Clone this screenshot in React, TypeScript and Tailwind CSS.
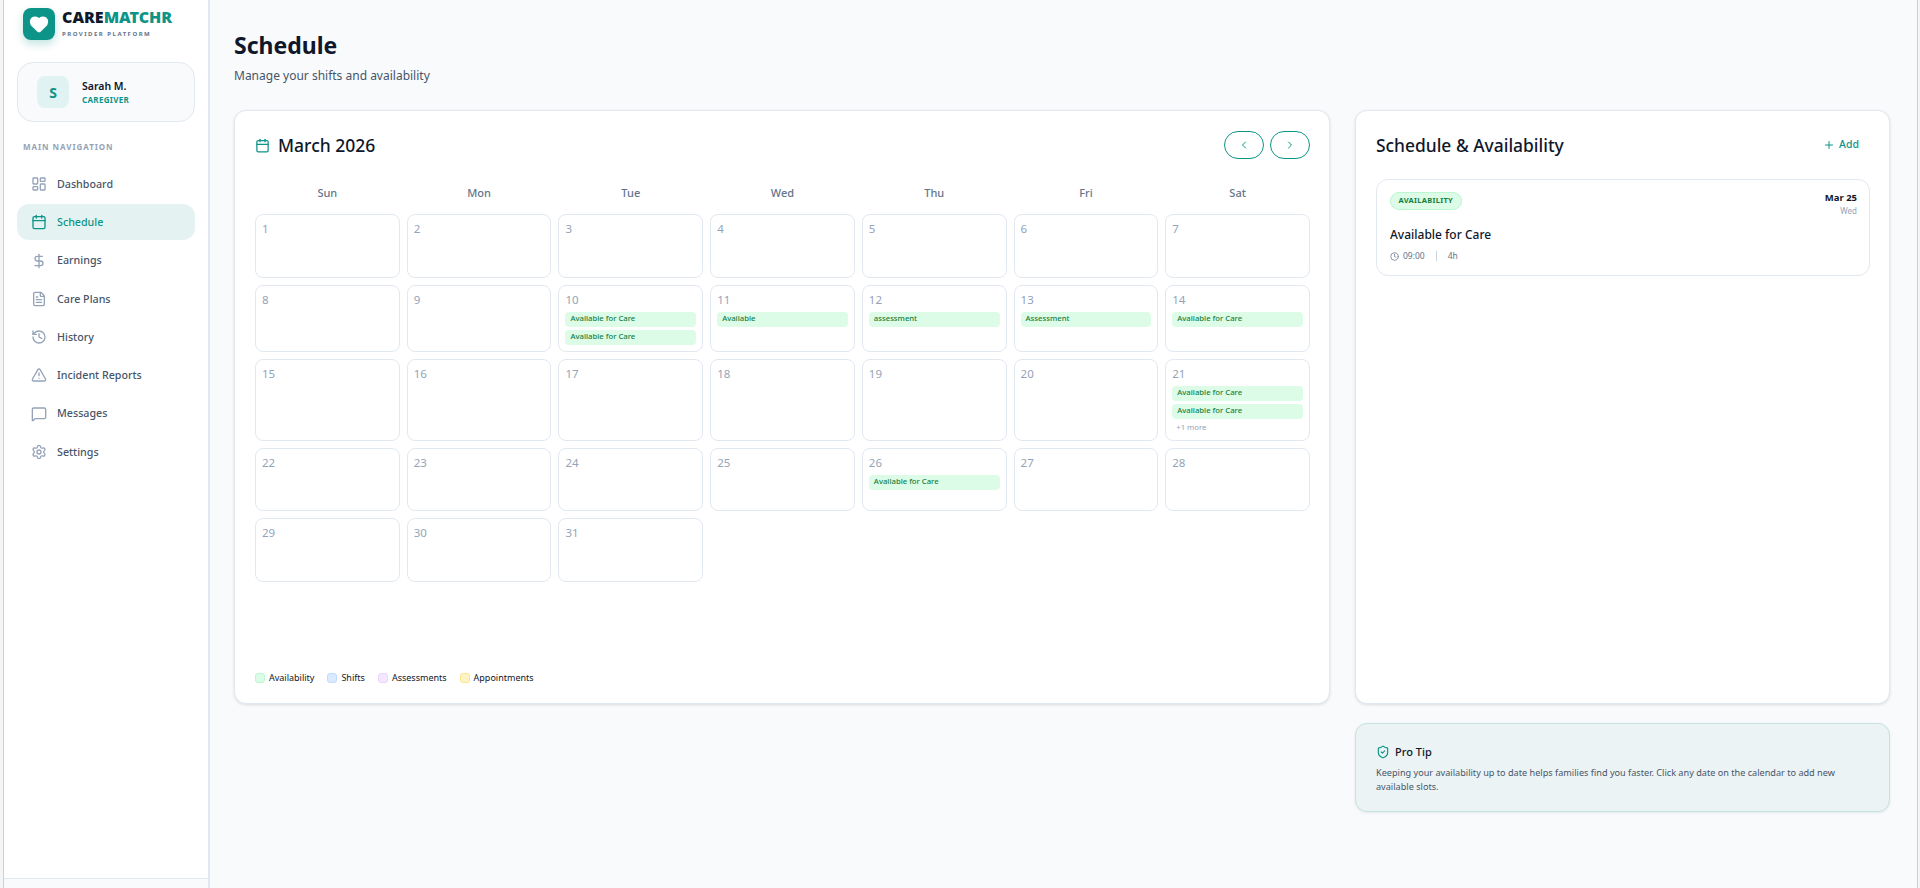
import { AlertTriangle, Calendar, ChevronLeft, ChevronRight, Clock, DollarSign, FileText, Heart, History, LayoutDashboard, MessageSquare, Plus, Settings, ShieldCheck } from "lucide-react";

const font = { fontFamily: '"Noto Sans", sans-serif' };

const navItems = [
  { label: "Dashboard", icon: LayoutDashboard },
  { label: "Schedule", icon: Calendar, active: true },
  { label: "Earnings", icon: DollarSign },
  { label: "Care Plans", icon: FileText },
  { label: "History", icon: History },
  { label: "Incident Reports", icon: AlertTriangle },
  { label: "Messages", icon: MessageSquare },
  { label: "Settings", icon: Settings },
];

const weekdays = ["Sun", "Mon", "Tue", "Wed", "Thu", "Fri", "Sat"];

const events: Record<number, string[]> = {
  10: ["Available for Care", "Available for Care"],
  11: ["Available"],
  12: ["assessment"],
  13: ["Assessment"],
  14: ["Available for Care"],
  21: ["Available for Care", "Available for Care"],
  26: ["Available for Care"],
};

const legend = [
  { label: "Availability", swatch: "bg-[#dcfce7] border-[#bbf7d0]" },
  { label: "Shifts", swatch: "bg-[#dbeafe] border-[#bfdbfe]" },
  { label: "Assessments", swatch: "bg-[#f3e8ff] border-[#e9d5ff]" },
  { label: "Appointments", swatch: "bg-[#fef3c7] border-[#fde68a]" },
];

function Sidebar() {
  return (
    <aside className="flex h-full w-[206px] shrink-0 flex-col border-r-2 border-[#e2e8f0] bg-white">
      <div className="flex items-center gap-[7px] pl-[19px] pt-2">
        <div className="flex h-8 w-8 items-center justify-center rounded-lg bg-[#0d9488] shadow-[0_4px_8px_rgba(13,148,136,0.25)]">
          <Heart className="h-5 w-5 fill-white text-white" />
        </div>
        <div className="-mt-[2px]">
          <div className="text-[16px] font-black leading-[17px] text-[#0f172a]">
            CARE<span className="text-[#0d9488]">MATCHR</span>
          </div>
          <div className="mt-[4px] text-[6px] font-bold leading-[8px] tracking-[0.25em] text-[#64748b]">PROVIDER PLATFORM</div>
        </div>
      </div>
      <div className="ml-[13px] mt-[22px] flex h-[60px] w-[178px] items-center gap-[13px] rounded-2xl border border-[#e2e8f0] bg-[#f8fafc] pl-[19px]">
        <div className="flex h-8 w-8 items-center justify-center rounded-lg bg-[#e0f2f1] text-[14px] font-bold text-[#0d9488]">S</div>
        <div>
          <div className="text-[10.5px] font-semibold leading-4 text-[#0f172a]">Sarah M.</div>
          <div className="text-[8px] font-bold leading-3 tracking-[0.04em] text-[#0d9488]">CAREGIVER</div>
        </div>
      </div>
      <div className="ml-[19px] mt-[19px] text-[8px] font-bold leading-[11px] tracking-[0.12em] text-[#94a3b8]">MAIN NAVIGATION</div>
      <nav className="ml-[13px] mt-[14px] flex w-[178px] flex-col gap-[2.25px]">
        {navItems.map((item) => {
          const Icon = item.icon;
          return (
            <div
              key={item.label}
              className={`flex h-9 items-center gap-[10px] rounded-xl pl-[14px] text-[10.7px] font-medium ${item.active ? "bg-[#e4f3f1] text-[#0d9488]" : "text-[#475569]"}`}
            >
              <Icon className={`h-4 w-4 ${item.active ? "text-[#0d9488]" : "text-[#94a3b8]"}`} strokeWidth={2} />
              {item.label}
            </div>
          );
        })}
      </nav>
      <div className="mt-auto h-[10px] border-t border-[#e2e8f0] bg-[#f8fafc]" />
    </aside>
  );
}

function DayCell({ day }: { day: number }) {
  const items = events[day] ?? [];
  return (
    <div className="min-h-[63.5px] rounded-lg border border-[#e2e8f0] bg-white p-1.5">
      <div className="text-[11.5px] leading-4 text-[#94a3b8]">{day}</div>
      {items.length > 0 && (
        <div className="mt-1 flex flex-col gap-[3px]">
          {items.map((label, i) => (
            <div key={i} className="flex h-[15px] items-center rounded-[4px] bg-[#dcfce7] px-[5px] text-[7.7px] font-medium text-[#15803d]">
              {label}
            </div>
          ))}
        </div>
      )}
      {day === 21 && <div className="mt-[2px] pl-[4px] text-[7.7px] leading-[13px] text-[#94a3b8]">+1 more</div>}
    </div>
  );
}

function CalendarCard() {
  const days = Array.from({ length: 31 }, (_, i) => i + 1);
  return (
    <section className="flex h-[594px] flex-col rounded-xl border border-[#e2e8f0] bg-white pl-5 pr-[19px] pt-5 shadow-[0_1px_3px_rgba(15,23,42,0.12)]">
      <div className="flex h-7 items-center justify-between">
        <div className="flex items-center gap-2">
          <Calendar className="h-[15px] w-[15px] text-[#0d9488]" />
          <h2 className="text-[17.5px] font-medium leading-7 text-[#0f172a]">March 2026</h2>
        </div>
        <div className="flex gap-[6px]">
          <button type="button" className="flex h-7 w-10 items-center justify-center rounded-full border border-[#0d9488] text-[#0d9488]">
            <ChevronLeft className="h-3 w-3" />
          </button>
          <button type="button" className="flex h-7 w-10 items-center justify-center rounded-full border border-[#0d9488] text-[#0d9488]">
            <ChevronRight className="h-3 w-3" />
          </button>
        </div>
      </div>
      <div className="mt-[26px] grid grid-cols-7 gap-x-[7px]">
        {weekdays.map((d) => (
          <div key={d} className="text-center text-[11px] font-medium leading-4 text-[#64748b]">
            {d}
          </div>
        ))}
      </div>
      <div className="mt-[13px] grid grid-cols-7 gap-[7px]">
        {days.map((d) => (
          <DayCell key={d} day={d} />
        ))}
      </div>
      <div className="mb-[19px] mt-auto flex items-center gap-[13px] text-[9px] leading-3 text-[#0f172a]">
        {legend.map((l) => (
          <div key={l.label} className="flex items-center gap-1">
            <span className={`h-[10px] w-[10px] rounded-[3px] border ${l.swatch}`} />
            {l.label}
          </div>
        ))}
      </div>
    </section>
  );
}

function AvailabilityCard() {
  return (
    <section className="h-[594px] rounded-xl border border-[#e2e8f0] bg-white pl-5 pr-[19px] pt-5 shadow-[0_1px_3px_rgba(15,23,42,0.12)]">
      <div className="flex h-7 items-center justify-between">
        <h2 className="text-[17.4px] font-medium leading-7 text-[#0f172a]">Schedule &amp; Availability</h2>
        <button type="button" className="mr-[11px] flex items-center gap-1 text-[10.5px] font-medium text-[#0d9488]">
          <Plus className="h-3 w-3" /> Add
        </button>
      </div>
      <div className="mt-5 h-[97px] rounded-xl border border-[#e2e8f0] bg-white pl-[13px] pr-3 pt-3">
        <div className="flex items-start justify-between">
          <span className="flex h-[18px] items-center rounded-full border border-[#bbf7d0] bg-[#dcfce7] px-[7.5px] text-[7.5px] font-bold tracking-[0.04em] text-[#15803d]">AVAILABILITY</span>
          <div className="-mt-px text-right">
            <div className="text-[9.5px] font-bold leading-[14px] text-[#0f172a]">Mar 25</div>
            <div className="text-[8px] leading-[12px] text-[#94a3b8]">Wed</div>
          </div>
        </div>
        <div className="mt-[9px] text-[12px] font-medium leading-[18px] text-[#0f172a]">Available for Care</div>
        <div className="mt-[6px] flex items-center text-[8.5px] leading-3 text-[#64748b]">
          <Clock className="mr-1 h-[9px] w-[9px]" />
          09:00
          <span className="mx-[11px] h-[10px] w-px bg-[#cbd5e1]" />
          4h
        </div>
      </div>
    </section>
  );
}

function ProTip() {
  return (
    <section className="mt-[19px] h-[89px] rounded-xl border border-[#c4e3de] bg-[#ebf3f4] px-5 pt-5 shadow-[0_1px_3px_rgba(15,23,42,0.08)]">
      <div className="flex items-center gap-[5px] text-[11px] font-medium leading-4 text-[#0f172a]">
        <ShieldCheck className="h-[14px] w-[14px] text-[#0d9488]" />
        Pro Tip
      </div>
      <p className="mt-[6px] text-[9.15px] leading-[13.5px] text-[#475569]">
        Keeping your availability up to date helps families find you faster. Click any date on the calendar to add new available slots.
      </p>
    </section>
  );
}

export default function App() {
  return (
    <div className="flex h-[888px] overflow-hidden bg-[#f8fafc]" style={font}>
      <div className="w-[3px] shrink-0 bg-[#f5f5f5]" />
      <div className="w-px shrink-0 bg-[#cfcfcf]" />
      <Sidebar />
      <main className="min-w-0 flex-1 pl-[24px] pr-[27px] pt-[29px]">
        <h1 className="text-[23px] font-bold leading-[32px] text-[#0f172a]">Schedule</h1>
        <p className="mt-[6px] text-[12px] leading-[18px] text-[#475569]">Manage your shifts and availability</p>
        <div className="mt-[25px] grid grid-cols-[1096px_535px] gap-x-[25px]">
          <CalendarCard />
          <div>
            <AvailabilityCard />
            <ProTip />
          </div>
        </div>
      </main>
      <div className="w-px shrink-0 bg-[#cfcfcf]" />
      <div className="w-[2px] shrink-0 bg-[#f5f5f5]" />
    </div>
  );
}
